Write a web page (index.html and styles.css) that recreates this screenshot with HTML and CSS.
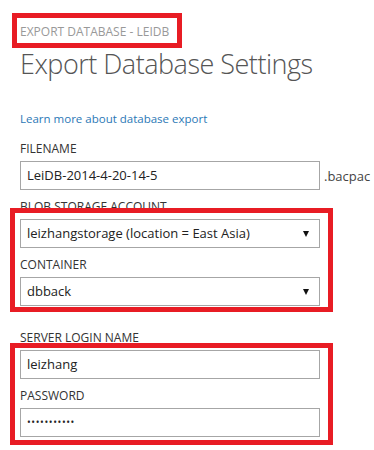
FILE: index.html
```html
<!DOCTYPE html>
<html lang="en">

<head>
    <meta charset="utf-8">
    <meta name="viewport" content="width=device-width, initial-scale=1">
    <title>Export Database Settings</title>
    <link rel="stylesheet" href="styles.css">
</head>

<body>
    <div class="page">
        <div class="crumb"><span class="crumb-text">EXPORT DATABASE - LEIDB</span></div>
        <h1 class="title">Export Database Settings</h1>

        <a class="learn" href="#">Learn more about database export</a>

        <!-- Filename -->
        <div class="field">
            <div class="label">FILENAME</div>
            <div class="row">
                <div class="input">LeiDB-2014-4-20-14-5</div>
                <span class="suffix">.bacpac</span>
            </div>
        </div>

        <!-- Storage -->
        <div class="label label-blob">BLOB STORAGE ACCOUNT</div>
        <div class="group group-storage">
            <div class="input select">
                <span>leizhangstorage (location = East Asia)</span>
                <span class="arrow"></span>
            </div>
            <div class="label">CONTAINER</div>
            <div class="input select">
                <span>dbback</span>
                <span class="arrow"></span>
            </div>
        </div>

        <!-- Login -->
        <div class="label label-login">SERVER LOGIN NAME</div>
        <div class="group group-login">
            <div class="input">leizhang</div>
            <div class="label">PASSWORD</div>
            <div class="input password">&bull;&bull;&bull;&bull;&bull;&bull;&bull;&bull;&bull;&bull;&bull;</div>
        </div>
    </div>
</body>

</html>
```

FILE: styles.css
```css
* {
    margin: 0;
    padding: 0;
    box-sizing: border-box;
}

html,
body {
    background: #fff;
    overflow: hidden;
    font-family: 'Open Sans', 'Noto Sans', sans-serif;
    color: #333;
}

.page {
    width: 374px;
    height: 450px;
    padding: 19px 0 0 20px;
}

/* Breadcrumb with red annotation box */
.crumb {
    height: 16px;
}

.crumb-text {
    position: relative;
    display: inline-block;
    font-size: 12px;
    line-height: 16px;
    color: #999;
}

.crumb-text::after {
    content: '';
    position: absolute;
    top: -11px;
    left: -8px;
    right: -13px;
    bottom: -8px;
    border: 5px solid #e81c24;
}

.title {
    margin-top: 12px;
    font-size: 27px;
    font-weight: 300;
    line-height: 34px;
    color: #555;
    letter-spacing: -0.5px;
}

.learn {
    display: block;
    margin-top: 30px;
    font-size: 11.5px;
    line-height: 16px;
    color: #2b78b6;
    text-decoration: none;
}

.field {
    margin-top: 14px;
}

.label {
    font-size: 12px;
    line-height: 16px;
    color: #333;
    margin-bottom: 4px;
}

.row {
    display: flex;
    align-items: center;
    width: 360px;
}

.input {
    width: 300px;
    height: 29px;
    border: 1px solid #a6a6a6;
    padding: 0 6px;
    font-size: 13px;
    line-height: 27px;
    color: #222;
    background: #fff;
    flex-shrink: 0;
}

.suffix {
    margin-left: 4px;
    font-size: 13px;
    color: #444;
    white-space: nowrap;
}

.label-blob {
    margin-top: 9px;
}

.label-login {
    margin-top: 24px;
}

.group {
    position: relative;
    width: 300px;
}

.group .label {
    margin-top: 9px;
}

.group::after {
    content: '';
    position: absolute;
    border: 5px solid #e81c24;
    pointer-events: none;
}

.group-storage::after {
    top: -11px;
    left: -10px;
    right: -13px;
    bottom: -6px;
}

.group-login::after {
    top: -7px;
    left: -10px;
    right: -13px;
    bottom: -8px;
}

.select {
    display: flex;
    justify-content: space-between;
    align-items: center;
}

.arrow {
    width: 0;
    height: 0;
    margin-right: 4px;
    border-left: 3.5px solid transparent;
    border-right: 3.5px solid transparent;
    border-top: 6px solid #111;
}

.password {
    font-size: 10px;
    letter-spacing: 0.6px;
}
```
